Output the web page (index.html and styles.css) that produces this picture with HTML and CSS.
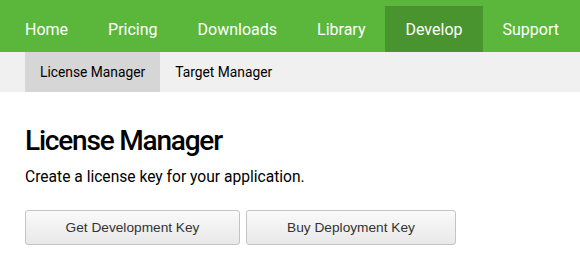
FILE: index.html
```html
<!DOCTYPE html>
<html lang="en">
<head>
  <meta charset="UTF-8">
  <meta name="viewport" content="width=device-width, initial-scale=1.0">
  <title>License Manager</title>
  <link rel="stylesheet" href="styles.css">
</head>
<body>
  <div class="topnav">
    <a href="#">Home</a>
    <a href="#">Pricing</a>
    <a href="#">Downloads</a>
    <a href="#">Library</a>
    <a href="#" class="active">Develop</a>
    <a href="#">Support</a>
  </div>

  <div class="subnav">
    <a href="#" class="active">License Manager</a>
    <a href="#">Target Manager</a>
  </div>

  <div class="content">
    <h1>License Manager</h1>
    <p>Create a license key for your application.</p>
    <div class="buttons">
      <button class="btn btn-dev">Get Development Key</button>
      <button class="btn btn-buy">Buy Deployment Key</button>
    </div>
  </div>
</body>
</html>
```

FILE: styles.css
```css
body { margin: 0; font-family: Roboto, "Liberation Sans", sans-serif; color: #000; background: #fff; }
a { text-decoration: none; }

.topnav { display: flex; align-items: flex-end; height: 52px; padding-left: 5px; background: #5bb73b; }
.topnav a { display: block; padding: 1px 20px 0; height: 45px; line-height: 45px; color: #fff; font-size: 16px; }
.topnav a.active { background: #4a9430; }

.subnav { display: flex; height: 40px; padding-left: 25px; background: #f0f0f0; }
.subnav a { display: block; padding: 0 15px; line-height: 40px; color: #000; font-size: 13.8px; }
.subnav a.active { background: #d6d6d6; }

.content { padding: 0 25px; }
.content h1 { margin: 31px 0 0; font-size: 28px; font-weight: 500; line-height: 36px; letter-spacing: -1.2px; }
.content p { margin: 8px 0 0; font-size: 15.6px; line-height: 20px; }

.buttons { display: flex; gap: 6px; margin-top: 23px; }
.btn { height: 35px; border: 1px solid #c4c4c4; border-radius: 3px; background: linear-gradient(#fafafa, #e8e8e8); color: #333; font-family: "Liberation Sans", Arial, sans-serif; font-size: 13.7px; cursor: pointer; }
.btn-dev { width: 215px; }
.btn-buy { width: 210px; }
```
